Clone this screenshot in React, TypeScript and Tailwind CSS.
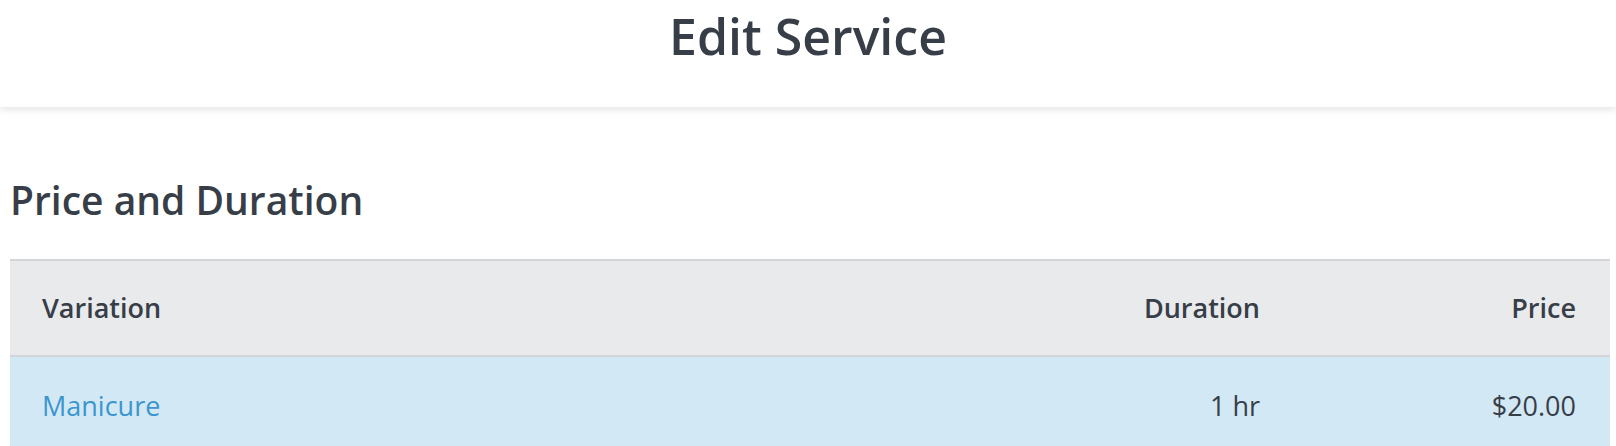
import React from "react";

const rows = [{ name: "Manicure", duration: "1 hr", price: "$20.00" }];

const App: React.FC = () => {
  return (
    <div className="min-h-[446px] bg-white font-['Open_Sans',sans-serif] text-[#373e48]">
      <header className="relative h-[107px] flex items-center justify-center shadow-[0_2px_8px_rgba(0,0,0,0.12)]">
        <h1 className="text-[50px] font-semibold leading-none pb-[36px]">Edit Service</h1>
      </header>

      <section className="pl-[10px] pr-[6px] pt-[73px]">
        <h2 className="text-[39px] font-semibold leading-none mb-[40px]">Price and Duration</h2>

        <table className="w-full border-collapse">
          <thead>
            <tr className="bg-[#e9eaec] border-t-[2px] border-b-[2px] border-[#d3d5d8] h-[96px]">
              <th className="text-left pl-[32px] text-[27px] font-semibold">Variation</th>
              <th className="text-right text-[27px] font-semibold w-[400px]">Duration</th>
              <th className="text-right pr-[34px] text-[27px] font-semibold w-[350px]">Price</th>
            </tr>
          </thead>
          <tbody>
            {rows.map((r) => (
              <tr key={r.name} className="bg-[#d3e8f5] h-[92px]">
                <td className="pl-[32px] pt-[8px] text-[27px] text-[#3b96d0]">{r.name}</td>
                <td className="text-right pt-[8px] text-[27px]">{r.duration}</td>
                <td className="text-right pr-[34px] pt-[8px] text-[27px]">{r.price}</td>
              </tr>
            ))}
          </tbody>
        </table>
      </section>
    </div>
  );
};

export default App;
